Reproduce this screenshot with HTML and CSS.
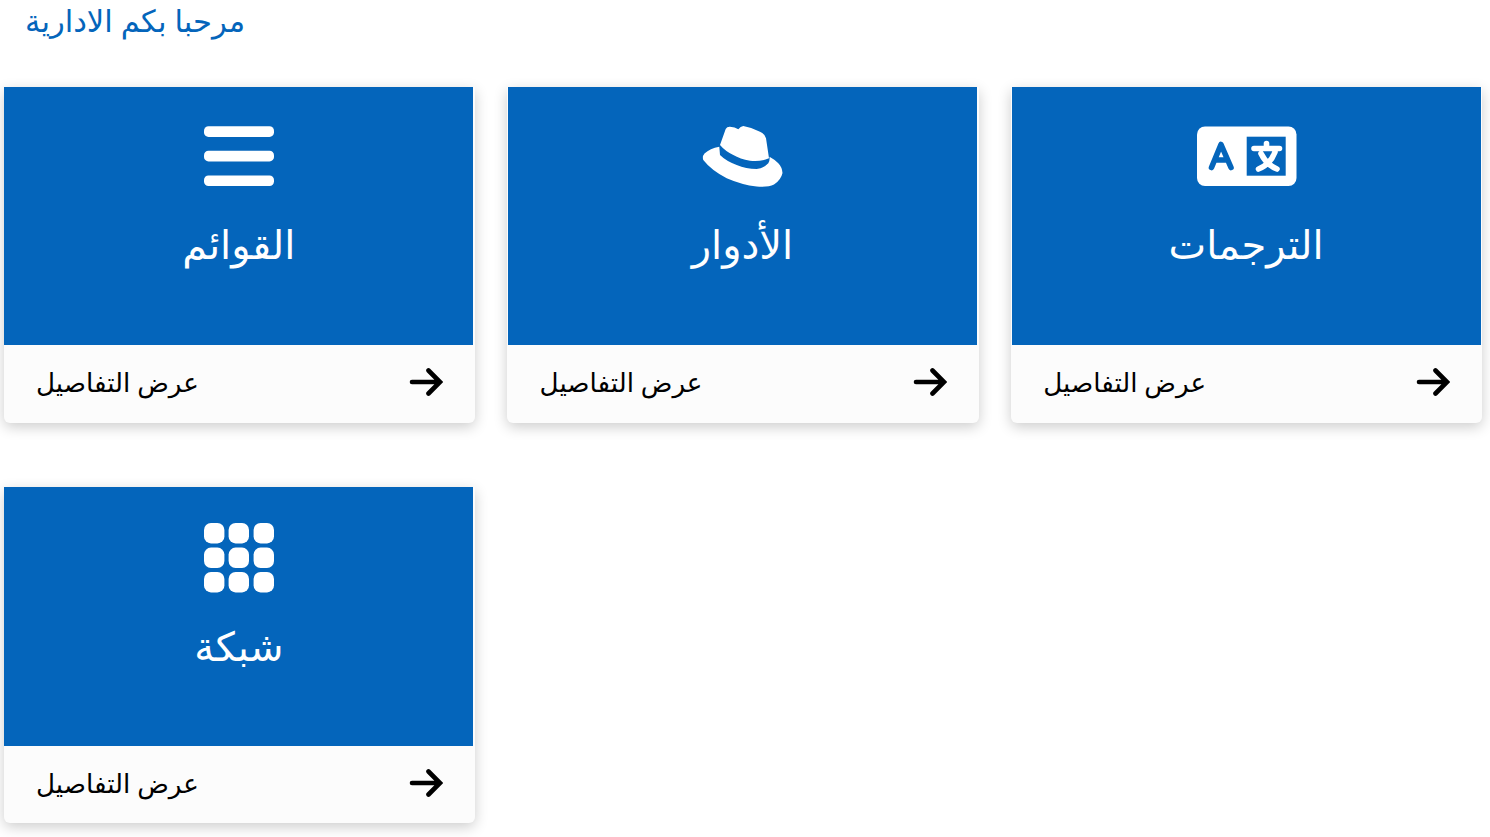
FILE: index.html
```html
<!DOCTYPE html>
<html lang="ar">
  <head>
    <meta charset="UTF-8" />
    <title>لوحة الادارية</title>
    <link rel="stylesheet" href="styles.css">
  </head>
  <body>
    <h1 class="welcome">مرحبا بكم الادارية</h1>

    <div class="cards">
      <a class="card" href="#">
        <div class="card-top">
          <div class="card-icon">
            <svg width="70" height="60" viewBox="0 0 70 60">
              <rect x="0" y="0.3" width="70" height="10.6" rx="4.5" fill="#fff" />
              <rect x="0" y="24.8" width="70" height="10.6" rx="4.5" fill="#fff" />
              <rect x="0" y="49.4" width="70" height="10.6" rx="4.5" fill="#fff" />
            </svg>
          </div>
          <h2 class="card-title">القوائم</h2>
        </div>
        <div class="card-foot">
          <span>عرض التفاصيل</span>
          <svg class="arrow" width="34" height="30" viewBox="0 0 34 30"><path d="M3 15H30.5M19.5 3.5L31 15L19.5 26.5" /></svg>
        </div>
      </a>

      <a class="card" href="#">
        <div class="card-top">
          <div class="card-icon">
            <svg width="81" height="61" viewBox="0 0 81 61">
              <path d="M18 19L23.7 3Q25 .5 28 .7Q33 1 36.3 3.3Q38.5 .2 41.3 0Q50 1.5 58 5.7Q63 8 64 12.3L67 32.3Q58 36 48 34.7Q38 33 31.3 29Q23 25 18 19Z" fill="#fff" />
              <path d="M17.3 20.7Q8 22.5 2.5 27.5Q0 30.5 1.3 34Q9 44 24.7 52.3Q40 59 54.7 60.5Q66 61.5 72 58.5Q79 54 80.5 47Q80 41 76.3 37.3Q72 33 67.5 30.7Q68 35 66.3 37.3Q62 42 54.7 43Q44 43 34.7 39Q24 35 18 29Z" fill="#fff" />
            </svg>
          </div>
          <h2 class="card-title">الأدوار</h2>
        </div>
        <div class="card-foot">
          <span>عرض التفاصيل</span>
          <svg class="arrow" width="34" height="30" viewBox="0 0 34 30"><path d="M3 15H30.5M19.5 3.5L31 15L19.5 26.5" /></svg>
        </div>
      </a>

      <a class="card" href="#">
        <div class="card-top">
          <div class="card-icon">
            <svg class="icon-translate" width="100" height="60" viewBox="0 0 100 60">
              <rect x="0" y="0.5" width="99.5" height="59.5" rx="8" fill="#fff" />
              <rect x="49.7" y="10.7" width="39" height="39" fill="#0465bb" />
              <path d="M14.5 41.5L24 18.5L34 41.5M18 34H30.5" fill="none" stroke="#0465bb" stroke-width="5.6" stroke-linecap="round" stroke-linejoin="round" />
              <path d="M57 22.5H82.5M69.5 17.5V22.5M64 27.5C67 34 73 40 80 43M78 26C75 34 69 40 61.5 43" fill="none" stroke="#fff" stroke-width="5.6" stroke-linecap="round" />
            </svg>
          </div>
          <h2 class="card-title">الترجمات</h2>
        </div>
        <div class="card-foot">
          <span>عرض التفاصيل</span>
          <svg class="arrow" width="34" height="30" viewBox="0 0 34 30"><path d="M3 15H30.5M19.5 3.5L31 15L19.5 26.5" /></svg>
        </div>
      </a>

      <a class="card" href="#">
        <div class="card-top">
          <div class="card-icon card-icon-tall">
            <svg class="icon-grid" width="70" height="70" viewBox="0 0 70 70">
              <rect x="0" y="0" width="20.4" height="20.4" rx="7" fill="#fff" />
              <rect x="24.6" y="0" width="20.4" height="20.4" rx="7" fill="#fff" />
              <rect x="49.6" y="0" width="20.4" height="20.4" rx="7" fill="#fff" />
              <rect x="0" y="24.6" width="20.4" height="20.4" rx="7" fill="#fff" />
              <rect x="24.6" y="24.6" width="20.4" height="20.4" rx="7" fill="#fff" />
              <rect x="49.6" y="24.6" width="20.4" height="20.4" rx="7" fill="#fff" />
              <rect x="0" y="49" width="20.4" height="20.4" rx="7" fill="#fff" />
              <rect x="24.6" y="49" width="20.4" height="20.4" rx="7" fill="#fff" />
              <rect x="49.6" y="49" width="20.4" height="20.4" rx="7" fill="#fff" />
            </svg>
          </div>
          <h2 class="card-title">شبكة</h2>
        </div>
        <div class="card-foot">
          <span>عرض التفاصيل</span>
          <svg class="arrow" width="34" height="30" viewBox="0 0 34 30"><path d="M3 15H30.5M19.5 3.5L31 15L19.5 26.5" /></svg>
        </div>
      </a>
    </div>
  </body>
</html>
```

FILE: styles.css
```css
* {
  margin: 0;
  padding: 0;
  box-sizing: border-box;
}
body {
  min-height: 837px;
  font-family: "Noto Sans", "DejaVu Sans", sans-serif;
  background-color: #ffffff;
  color: #000000;
}
.welcome {
  height: 86.6px;
  padding-left: 25px;
  font-size: 30.6px;
  line-height: 40px;
  font-weight: 400;
  color: #0465bb;
  white-space: nowrap;
}
.cards {
  display: grid;
  grid-template-columns: repeat(3, 471.5px);
  column-gap: 32.1px;
  row-gap: 64px;
  padding-left: 3.5px;
}
.card {
  display: block;
  height: 336.4px;
  text-decoration: none;
  color: inherit;
  background-color: #fcfcfc;
  border-radius: 0 0 6px 6px;
  box-shadow: 0 4px 14px rgba(0, 0, 0, 0.2);
}
.card-top {
  width: 469px;
  height: 258.6px;
  margin-left: 0.9px;
  padding-top: 39px;
  background-color: #0465bb;
  color: #ffffff;
  text-align: center;
}
.card-icon {
  height: 60px;
  display: flex;
  justify-content: center;
}
.card-icon-tall {
  height: 62px;
}
.icon-grid {
  margin-top: -3px;
}
.icon-translate {
  margin-left: 1px;
}
.card-title {
  margin-top: 30px;
  font-size: 40px;
  line-height: 56px;
  font-weight: 400;
}
.card-foot {
  height: 77px;
  display: flex;
  justify-content: space-between;
  align-items: center;
  padding: 0 32px 2.8px 32.5px;
  font-size: 26.2px;
}
.arrow path {
  fill: none;
  stroke: #000;
  stroke-width: 4.6;
  stroke-linecap: round;
  stroke-linejoin: miter;
}
```
